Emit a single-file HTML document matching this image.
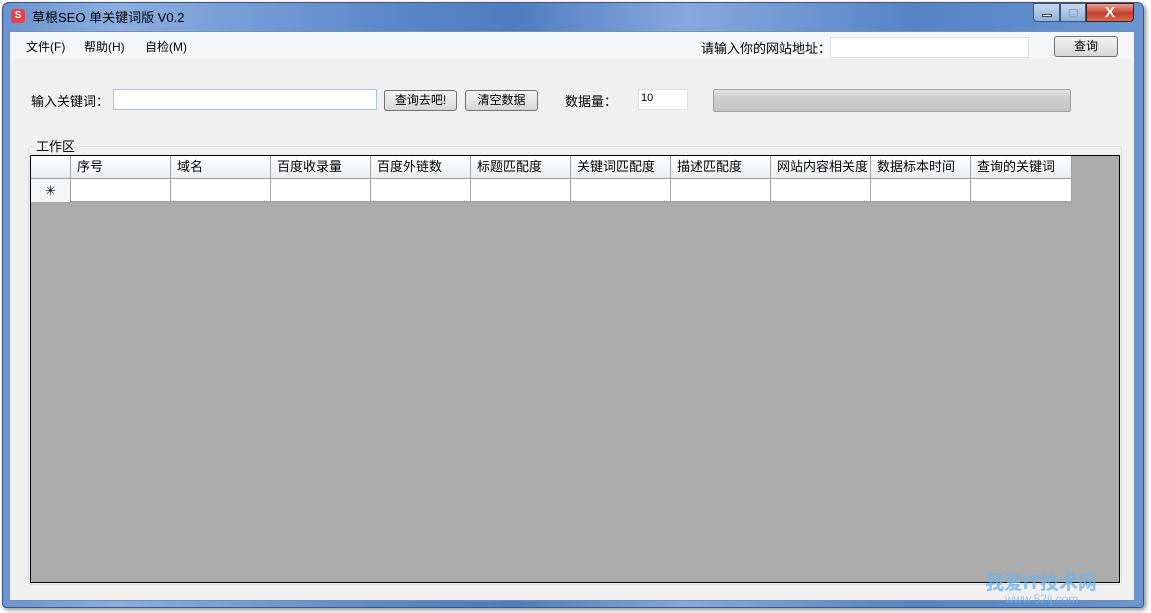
<!DOCTYPE html>
<html><head><meta charset="utf-8"><style>
*{margin:0;padding:0;box-sizing:border-box}
body{width:1151px;height:613px;background:#fff;position:relative;overflow:hidden;font-family:"Liberation Sans","Noto Sans CJK SC","WenQuanYi Zen Hei",sans-serif;font-size:12px;color:#000}
.abs{position:absolute}
#win{left:2px;top:2px;width:1142px;height:606px;border-radius:7px 7px 4px 4px;background:linear-gradient(90deg,#6b93cf 0%,#8aaee0 10%,#5a86c8 35%,#4f7cc0 45%,#86a9dc 60%,#5583c6 80%,#6a95d2 100%);border:1px solid #3b5478;box-shadow:2px 2px 5px rgba(0,0,0,.45)}
#client{left:9px;top:31px;width:1126px;height:570px;background:#f0f0f0;border:1px solid #7a8ea8}
.t{position:absolute;white-space:nowrap}
.btn{position:absolute;border:1px solid #707070;border-radius:3px;background:linear-gradient(#f3f3f3,#e6e6e6 50%,#d6d6d6);text-align:center;font-size:12px;line-height:19px}
.inp{position:absolute;background:#fff;border:1px solid #abadb3}
.cell{position:absolute;border-right:1px solid #a0a0a0;height:22px;font-size:13px;line-height:21px;padding-left:6px}
</style></head><body>
<div id="win" class="abs"></div>
<div class="abs" style="left:11px;top:9px;width:14px;height:14px;background:#e8414c;border-radius:3px;color:#fff;font-size:10px;font-weight:bold;text-align:center;line-height:14px">S</div>
<div class="t" style="left:32px;top:7px;font-size:13px;color:#000">草根SEO 单关键词版 V0.2</div>
<div class="abs" style="left:1033px;top:3px;width:27px;height:19px;border:1px solid #3b5478;border-radius:0 0 0 4px;background:linear-gradient(#c8d8ee,#8fb0dc)"><div class="abs" style="left:8px;top:10px;width:10px;height:3px;background:#fff;border:1px solid #444"></div></div>
<div class="abs" style="left:1060px;top:3px;width:26px;height:19px;border:1px solid #3b5478;background:linear-gradient(#c8d8ee,#8fb0dc)"><div class="abs" style="left:8px;top:5px;width:9px;height:8px;border:1px solid #8aa0c0"></div></div>
<div class="abs" style="left:1086px;top:3px;width:48px;height:19px;border:1px solid #3b2020;border-radius:0 0 4px 0;background:linear-gradient(#e8a090,#c4402c 55%,#d86a50);color:#fff;font-weight:bold;font-size:15px;text-align:center;line-height:18px">X</div>
<div id="client" class="abs"></div>
<div class="abs" style="left:10px;top:32px;width:1124px;height:26px;background:#f5f6f7"></div>
<div class="t" style="left:26px;top:38px">文件(F)</div>
<div class="t" style="left:84px;top:38px">帮助(H)</div>
<div class="t" style="left:145px;top:38px">自检(M)</div>
<div class="t" style="left:701px;top:38px;font-size:13px">请输入你的网站地址：</div>
<div class="inp" style="left:830px;top:37px;width:199px;height:21px;border-color:#e0e0e0"></div>
<div class="btn" style="left:1054px;top:36px;width:64px;height:21px">查询</div>
<div class="t" style="left:31px;top:91px;font-size:13px">输入关键词：</div>
<div class="inp" style="left:113px;top:89px;width:264px;height:21px;border-color:#a8c4e0"></div>
<div class="btn" style="left:384px;top:90px;width:73px;height:21px">查询去吧!</div>
<div class="btn" style="left:465px;top:90px;width:73px;height:21px">清空数据</div>
<div class="t" style="left:565px;top:91px;font-size:13px">数据量：</div>
<div class="inp" style="left:638px;top:89px;width:50px;height:21px;border-color:#e0e0e0;font-size:11px;padding:2px 0 0 2px">10</div>
<div class="abs" style="left:713px;top:89px;width:358px;height:23px;border:1px solid #a0a0a0;border-radius:2px;background:linear-gradient(#e4e4e4,#cdcdcd 40%,#c4c4c4)"></div>
<div class="abs" style="left:28px;top:146px;width:1094px;height:439px;border:1px solid #d5dfe5;border-radius:3px"></div>
<div class="t" style="left:34px;top:136px;background:#f0f0f0;padding:0 2px;font-size:13px">工作区</div>
<div class="abs" style="left:30px;top:155px;width:1090px;height:428px;background:#ababab;border:1px solid #000"></div>
<div class="abs" style="left:31px;top:156px;width:1041px;height:23px;background:linear-gradient(#fff,#f4f5f7 60%,#e8eaee);border-bottom:1px solid #a0a0a0"></div>
<div class="abs" style="left:31px;top:179px;width:40px;height:23px;background:#f5f6f8;border-right:1px solid #a0a0a0;text-align:center;line-height:23px;font-size:13px">✳</div>
<div class="abs" style="left:71px;top:179px;width:1001px;height:23px;background:#fff;border-bottom:1px solid #a0a0a0"></div>
<div class="abs" style="left:31px;top:156px;width:40px;height:23px;border-right:1px solid #a0a0a0"></div>
<div class="cell" style="left:71px;top:156px;width:100px">序号</div>
<div class="cell" style="left:171px;top:156px;width:100px">域名</div>
<div class="cell" style="left:271px;top:156px;width:100px">百度收录量</div>
<div class="cell" style="left:371px;top:156px;width:100px">百度外链数</div>
<div class="cell" style="left:471px;top:156px;width:100px">标题匹配度</div>
<div class="cell" style="left:571px;top:156px;width:100px">关键词匹配度</div>
<div class="cell" style="left:671px;top:156px;width:100px">描述匹配度</div>
<div class="cell" style="left:771px;top:156px;width:100px">网站内容相关度</div>
<div class="cell" style="left:871px;top:156px;width:100px">数据标本时间</div>
<div class="cell" style="left:971px;top:156px;width:101px">查询的关键词</div>
<div class="cell" style="left:71px;top:179px;width:100px"></div>
<div class="cell" style="left:171px;top:179px;width:100px"></div>
<div class="cell" style="left:271px;top:179px;width:100px"></div>
<div class="cell" style="left:371px;top:179px;width:100px"></div>
<div class="cell" style="left:471px;top:179px;width:100px"></div>
<div class="cell" style="left:571px;top:179px;width:100px"></div>
<div class="cell" style="left:671px;top:179px;width:100px"></div>
<div class="cell" style="left:771px;top:179px;width:100px"></div>
<div class="cell" style="left:871px;top:179px;width:100px"></div>
<div class="cell" style="left:971px;top:179px;width:101px"></div>
<div class="t" style="left:985px;top:568px;font-size:19px;font-weight:bold;color:#6bb4ee;opacity:.8">我爱IT技术网</div>
<div class="t" style="left:1005px;top:592px;font-size:12px;color:#6bb4ee;opacity:.7">www.52ij.com</div>
</body></html>
